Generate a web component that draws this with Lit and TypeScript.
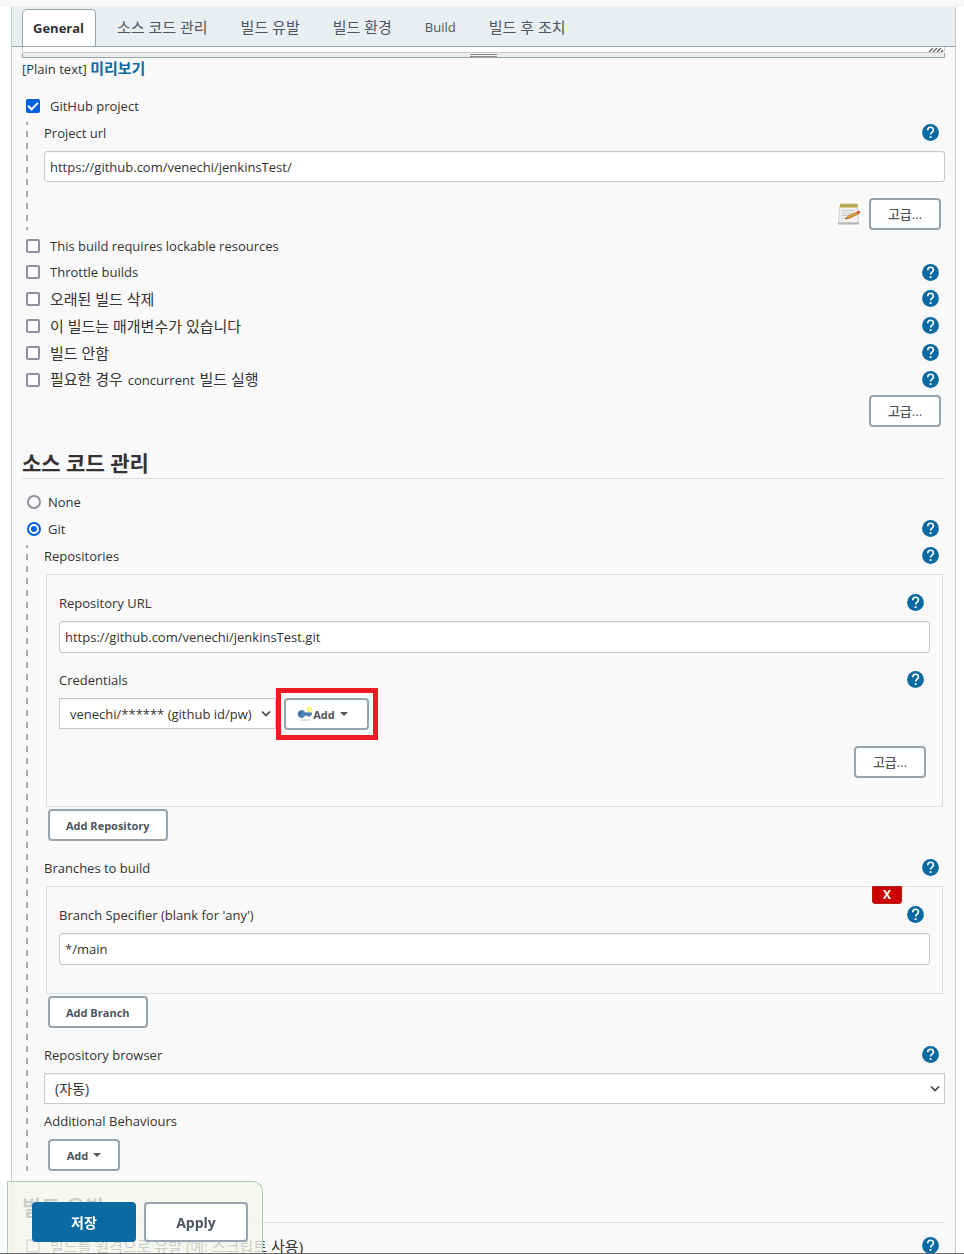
import { LitElement, html, css, svg, nothing } from "lit";
import { customElement, property } from "lit/decorators.js";
import { classMap } from "lit/directives/class-map.js";

const fonts = css`"Open Sans", "Noto Sans CJK KR", sans-serif`;

const controls = css`
  * { box-sizing: border-box; }
  button, input, select, textarea { font-family: ${fonts}; margin: 0; }
  .row { display: flex; align-items: center; justify-content: space-between; height: 27px; padding: 0 6px 2px 0; }
  .row label, .row .label { display: flex; align-items: center; white-space: nowrap; }
  .short { height: 26px; }
  .ko { font-size: 15px; }
  .ko .en { font-size: 13px; padding: 0 1px; }
`;

const fold = (text: string) =>
  text.split(/([A-Za-z]+)/).map((part, i) => (i % 2 ? html`<span class="en">${part}</span>` : part));

@customElement("help-button")
class HelpButton extends LitElement {
  static styles = css`
    :host { display: block; height: 17px; }
    button { display: block; border: 0; padding: 0; background: none; height: 17px; width: 17px; }
    svg { display: block; }
  `;
  render() {
    return html`<button type="button" aria-label="Help">
      <svg width="17" height="17" viewBox="0 0 17 17">
        <circle cx="8.5" cy="8.5" r="8.4" fill="#0b6aa2" />
        <path d="M5.7 6.3C5.700 4.300 6.900 3.200 8.600 3.200s2.800 1.100 2.800 2.700c0 2.100-2.800 2.300-2.800 4.700" fill="none" stroke="#fff" stroke-width="1.6" />
        <rect x="7.7" y="12.2" width="1.8" height="1.8" fill="#fff" />
      </svg>
    </button>`;
  }
}

@customElement("option-row")
class OptionRow extends LitElement {
  @property() text = "";
  @property() kind = "checkbox";
  @property() group = "";
  @property({ type: Boolean }) on = false;
  @property({ type: Boolean }) help = false;

  static styles = [
    controls,
    css`
      :host { display: block; }
      input {
        appearance: none; width: 14px; height: 14px; border: 2px solid #8f8f9d; border-radius: 2px;
        background: #fff; margin: 0 10px 0 4px; display: grid; place-items: center; flex: none;
      }
      input[type="radio"] { border-radius: 50%; margin: 0 7px 0 5px; }
      input:checked { border-color: #0060df; }
      input[type="checkbox"]:checked { background: #0060df; }
      input[type="checkbox"]:checked::before {
        content: ""; width: 8px; height: 4px; border: solid #fff; border-width: 0 0 2px 2px;
        transform: translateY(-1px) rotate(-45deg);
      }
      input[type="radio"]:checked::before { content: ""; width: 6px; height: 6px; border-radius: 50%; background: #0060df; }
    `,
  ];

  render() {
    const korean = /[가-힣]/.test(this.text);
    return html`<div class=${classMap({ row: true, short: !korean && this.kind === "checkbox" })}>
      <label>
        <input type=${this.kind} name=${this.group || nothing} .checked=${this.on} />
        <span class=${korean ? "ko" : "latin"}>${korean ? fold(this.text) : this.text}</span>
      </label>
      ${this.help ? html`<help-button></help-button>` : nothing}
    </div>`;
  }
}

const chevron = svg`<path d="M1 1.5 5 5.5 9 1.5" fill="none" stroke="#444" stroke-width="1.7"/>`;

@customElement("app-root")
class AppRoot extends LitElement {
  static styles = [
    controls,
    css`
      :host {
        display: flex; flex-direction: column; height: 100vh; position: relative; overflow: hidden;
        font: 13px/20px ${fonts}; color: #333; background: #fff; border-bottom: 1px solid #68686b; box-sizing: border-box;
      }
      .strip { height: 7px; background: #f7f7f7; flex: none; }
      main {
        flex: 1; min-height: 0; overflow: auto; scrollbar-width: none; margin: 0 8px 0 11px;
        border: solid #c8c8c8; border-width: 0 1px; background: #f9f9f9;
      }
      nav {
        display: flex; align-items: flex-end; gap: 1px; height: 40px; padding-left: 10px;
        background: #e9eef1; border-bottom: 1px solid #98a3ab;
      }
      nav a { display: block; height: 37px; line-height: 36px; padding: 0 16px; color: #4d545d; text-decoration: none; white-space: nowrap; }
      nav .active {
        min-width: 74px; padding: 0 10px; margin-right: 4px; border: 1px solid #98a3ab; border-bottom: 0; border-radius: 5px 5px 0 0;
        background: #fff; color: #333; font-weight: 700;
      }
      form { padding: 0 10px 20px; }
      .clip { display: flex; align-items: flex-end; height: 6px; overflow: hidden; position: relative; }
      textarea { display: block; width: 100%; height: 60px; border: 1px solid #c8c8c8; border-radius: 3px; resize: none; flex: none; background: #fff; }
      .grip { position: absolute; right: 1px; bottom: 1px; }
      .handle {
        height: 5px; background: #e9eef1; border: solid #98a3ab; border-width: 0 1px 1px;
        display: flex; justify-content: center; align-items: flex-end;
      }
      .handle i { width: 27px; height: 3px; border: solid #888d84; border-width: 1px 0; }
      .format { height: 22px; margin-bottom: 14px; line-height: 20px; }
      .format a { color: #0b6aa2; font-weight: 700; text-decoration: none; font-size: 15px; }
      .nest {
        padding-left: 22px;
        background: repeating-linear-gradient(#aaa 0 3px, transparent 3px 9px, #aaa 9px 12px) 4px 2px / 2px 100% no-repeat;
      }
      .field { display: block; width: 100%; height: 31px; margin-top: 4px; padding: 0 5px; border: 1px solid #c8c8c8; border-radius: 3px; background: #fff; color: #333; font-size: 13px; box-shadow: inset 0 1px 1px #0000000d; }
      .box .field { height: 32px; }
      .end { display: flex; justify-content: flex-end; align-items: center; gap: 8px; padding-right: 4px; }
      .gap { margin-top: 16px; }
      .btn {
        display: flex; align-items: center; justify-content: center; height: 32px; padding: 0 16px;
        border: 2px solid #98a3ab; border-radius: 4px; background: #fff; color: #4d545d; font-size: 11px; font-weight: 700; white-space: nowrap;
      }
      .advanced { width: 72px; padding: 0 0 2px; font-weight: 500; font-size: 13px; }
      .add { margin: 2px 0 0 4px; }
      .list { margin-top: 4px; }
      .options { margin: 4px 0 1px; }
      h2 { margin: 0 0 10px; height: 52px; padding-top: 22px; line-height: 28px; font-size: 21px; font-weight: 700; border-bottom: 1px solid #ddd; }
      .box { margin: 4px 2px 0; padding: 15px 12px 28px; border: 1px solid #ddd; position: relative; }
      .spaced { margin-top: 14px; }
      .pick { position: relative; display: block; }
      .pick select { appearance: none; width: 100%; height: 31px; padding: 0 10px; border: 1px solid #c8c8c8; border-radius: 0; background: #fff; color: #333; font-size: 13px; display: block; box-shadow: inset 0 1px 1px #0000000d; }
      .pick .ko { font-size: 14px; }
      .pick svg { position: absolute; right: 5px; top: 12px; pointer-events: none; }
      .creds { display: flex; align-items: flex-start; margin-top: 4px; gap: 8px; height: 32px; }
      .creds .pick { width: 217px; }
      .mark { position: relative; }
      .mark::after { content: ""; position: absolute; inset: -10px -9px -10px -8px; border: 5px solid #ed1c24; pointer-events: none; }
      .key { width: 85px; padding: 0 8px 0 0; }
      .caret { border: 4px solid transparent; border-top-color: #4d545d; border-bottom: 0; margin-left: 5px; }
      .menu { width: 72px; padding: 0; margin-top: 4px; }
      .remove {
        position: absolute; top: -1px; right: 40px; width: 30px; height: 18px; padding: 0; border: 1px solid #b3200f;
        border-radius: 0 0 3px 3px; background: #c00; color: #fff; font-size: 12px; line-height: 16px; font-weight: 700;
      }
      .sticky {
        position: absolute; left: 7px; bottom: 0; display: flex; gap: 8px; padding: 20px 14px 11px 24px;
        border: 1px solid #a6cdb6; border-bottom: 0; border-radius: 0 10px 0 0; background: #f4f7efc8;
      }
      .sticky .btn { width: 104px; height: 40px; font-size: 14px; padding: 0; }
      .sticky .save { background: #0b6aa2; border-color: #0b6aa2; color: #fff; }
    `,
  ];

  private advanced() {
    return html`<button type="button" class="btn advanced">고급...</button>`;
  }

  private label(text: string, id: string, help = true, spaced = false) {
    return html`<div class=${classMap({ row: true, spaced })}>
      ${id ? html`<label for=${id}>${text}</label>` : html`<span class="label">${text}</span>`}
      ${help ? html`<help-button></help-button>` : nothing}
    </div>`;
  }

  render() {
    return html`
      <div class="strip"></div>
      <main>
        <nav>
          <a class="active" href="#general">General</a>
          <a class="ko" href="#scm">소스 코드 관리</a>
          <a class="ko" href="#triggers">빌드 유발</a>
          <a class="ko" href="#environment">빌드 환경</a>
          <a href="#build">Build</a>
          <a class="ko" href="#post">빌드 후 조치</a>
        </nav>
        <form @submit=${(e: Event) => e.preventDefault()}>
          <div class="clip">
            <textarea aria-label="Description"></textarea>
            <svg class="grip" width="16" height="4" viewBox="0 0 16 4"><path d="M1 4 5 0M5 4 9 0M9 4 13 0M13 4 15 2" stroke="#555" stroke-width="1.2" /></svg>
          </div>
          <div class="handle"><i></i></div>
          <div class="format">[Plain text] <a href="#preview">미리보기</a></div>

          <option-row text="GitHub project" on></option-row>
          <div class="nest">
            ${this.label("Project url", "project")}
            <input class="field" id="project" type="text" value="https://github.com/venechi/jenkinsTest/" />
            <div class="end gap">
              <svg width="24" height="24" viewBox="0 0 24 24">
                <path d="M2.500 4h18l1 17H1.500z" fill="#f1f1ef" stroke="#bbb" stroke-width=".7" />
                <path d="M1.200 20.500h20.600v2H1.200z" fill="#b5b5b5" />
                <path d="M3 2.500h17.500v3H3z" fill="#c0a948" />
                <path d="M4 1.500v2M6 1.500v2M8 1.500v2M10 1.500v2M12 1.500v2M14 1.500v2M16 1.500v2M18 1.500v2M20 1.500v2" stroke="#9a8a35" stroke-width=".9" />
                <path d="M4.500 8.500h13M4.500 11h11M4.500 13.500h8M4 16h5" stroke="#c8c8c8" />
                <path d="m8.500 17 2.500-3 9-4 1.500 2-9.500 4.500z" fill="#dc9b32" stroke="#9a651b" stroke-width=".6" />
                <path d="m19.500 10 2.500-1.500 1.500 2-2.200 1.500z" fill="#d94a38" />
                <path d="m8.500 17 1-1.600.9 1z" fill="#333" />
              </svg>
              ${this.advanced()}
            </div>
          </div>

          <div class="options">
            <option-row text="This build requires lockable resources"></option-row>
            <option-row text="Throttle builds" help></option-row>
            <option-row text="오래된 빌드 삭제" help></option-row>
            <option-row text="이 빌드는 매개변수가 있습니다" help></option-row>
            <option-row text="빌드 안함" help></option-row>
            <option-row text="필요한 경우 concurrent 빌드 실행" help></option-row>
          </div>
          <div class="end">${this.advanced()}</div>

          <h2 id="scm">소스 코드 관리</h2>
          <option-row kind="radio" text="None"></option-row>
          <option-row kind="radio" text="Git" on help></option-row>
          <div class="nest">
            ${this.label("Repositories", "")}
            <div class="box">
              ${this.label("Repository URL", "repo")}
              <input class="field" id="repo" type="text" value="https://github.com/venechi/jenkinsTest.git" />
              ${this.label("Credentials", "creds", true, true)}
              <div class="creds">
                <div class="pick">
                  <select id="creds"><option>venechi/****** (github id/pw)</option></select>
                  <svg width="10" height="7" viewBox="0 0 10 7">${chevron}</svg>
                </div>
                <div class="mark">
                  <button type="button" class="btn key">
                    <svg width="16" height="16" viewBox="0 0 16 16">
                      <ellipse cx="8" cy="14" rx="6" ry="1" fill="#ddd" />
                      <circle cx="12.500" cy="3.500" r="2.800" fill="#fcf36b" />
                      <circle cx="12.500" cy="3.500" r="1.200" fill="#fffbc0" />
                      <path d="M1 8a3.600 3.600 0 0 1 7-1.200h6.500V9H13v1.300h-2V9.200H8A3.600 3.600 0 0 1 1 8z" fill="#4f82bd" stroke="#3b689e" stroke-width=".6" />
                      <circle cx="3.300" cy="7.600" r="1" fill="#244b7c" />
                    </svg>Add<i class="caret"></i>
                  </button>
                </div>
              </div>
              <div class="end gap">${this.advanced()}</div>
            </div>
            <button type="button" class="btn add">Add Repository</button>

            ${this.label("Branches to build", "", true, true)}
            <div class="box">
              <button type="button" class="remove">X</button>
              ${this.label("Branch Specifier (blank for 'any')", "branch")}
              <input class="field" id="branch" type="text" value="*/main" />
            </div>
            <button type="button" class="btn add">Add Branch</button>

            ${this.label("Repository browser", "browser", true, true)}
            <div class="pick list">
              <select id="browser" class="ko"><option>(자동)</option></select>
              <svg width="10" height="7" viewBox="0 0 10 7">${chevron}</svg>
            </div>
            <div class="list">${this.label("Additional Behaviours", "", false)}</div>
            <button type="button" class="btn add menu">Add<i class="caret"></i></button>
          </div>

          <h2 id="triggers">빌드 유발</h2>
          <option-row text="빌드를 원격으로 유발 (예: 스크립트 사용)" help></option-row>
        </form>
      </main>
      <div class="sticky">
        <button type="button" class="btn save">저장</button>
        <button type="button" class="btn">Apply</button>
      </div>
    `;
  }
}
